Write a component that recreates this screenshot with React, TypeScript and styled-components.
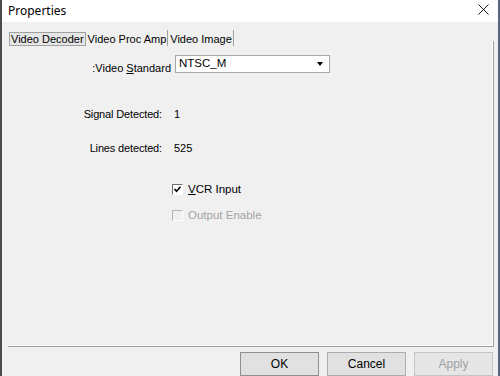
import React from "react";
import styled, { createGlobalStyle } from "styled-components";

const GlobalStyle = createGlobalStyle`
  html, body {
    margin: 0;
    padding: 0;
    width: 500px;
    height: 376px;
    overflow: hidden;
    background: #f0f0f0;
  }
`;

export default function App() {
  return (
    <>
      <GlobalStyle />
      <Window>
        <TitleBar>
          <Title>Properties</Title>
          <CloseButton>
            <svg width="11" height="11" viewBox="0 0 11 11">
              <path d="M0.5 0.5 L10.5 10.5 M10.5 0.5 L0.5 10.5" stroke="#1a1a1a" strokeWidth="1" />
            </svg>
          </CloseButton>
        </TitleBar>
        <Body>
          <TabStrip>
            <Tab $active>Video Decoder</Tab>
            <Tab>Video Proc Amp</Tab>
            <Tab>Video Image</Tab>
          </TabStrip>
          <Panel>
            <StandardRow>
              <StandardLabel>
                :Video <u>S</u>tandard
              </StandardLabel>
              <Select>
                <SelectText>NTSC_M</SelectText>
                <Arrow />
              </Select>
            </StandardRow>
            <InfoGrid>
              <InfoLabel>Signal Detected:</InfoLabel>
              <InfoValue>1</InfoValue>
              <InfoLabel>Lines detected:</InfoLabel>
              <InfoValue>525</InfoValue>
            </InfoGrid>
            <Checks>
              <CheckRow>
                <CheckBox>
                  <svg width="9" height="9" viewBox="0 0 9 9">
                    <path d="M1.5 4 L3.5 6.2 L7.5 1.8" stroke="#000" strokeWidth="1.6" fill="none" />
                  </svg>
                </CheckBox>
                <CheckText>
                  <u>V</u>CR Input
                </CheckText>
              </CheckRow>
              <CheckRow $disabled>
                <CheckBox $disabled />
                <CheckText $disabled>Output Enable</CheckText>
              </CheckRow>
            </Checks>
          </Panel>
          <ButtonRow>
            <Button $default>OK</Button>
            <Button>Cancel</Button>
            <Button disabled>Apply</Button>
          </ButtonRow>
        </Body>
      </Window>
    </>
  );
}

const Window = styled.div`
  width: 500px;
  height: 376px;
  box-sizing: border-box;
  border-left: 2px solid #4b4b4b;
  border-right: 2px solid #56647e;
  display: flex;
  flex-direction: column;
  background: #f0f0f0;
  overflow: hidden;
  font-family: "Liberation Sans", Arial, sans-serif;
  color: #000;
`;

const TitleBar = styled.div`
  height: 22px;
  flex: none;
  background: #ffffff;
  display: flex;
  align-items: center;
  justify-content: space-between;
  padding: 0 9px 0 6px;
`;

const Title = styled.span`
  font-family: "Noto Sans", "Open Sans", sans-serif;
  font-size: 12px;
  color: #000;
  margin-top: -1px;
`;

const CloseButton = styled.span`
  display: flex;
  margin-top: -3px;
`;

const Body = styled.div`
  flex: 1;
  display: flex;
  flex-direction: column;
  padding: 8px 4px 0 6px;
  min-height: 0;
`;

const TabStrip = styled.div`
  display: flex;
  height: 16px;
  flex: none;
  align-items: stretch;
`;

const Tab = styled.div<{ $active?: boolean }>`
  font-size: 11px;
  line-height: 12px;
  padding: 3px 1px 0 2px;
  border-right: 1px solid #a0a0a0;
  white-space: nowrap;
  ${({ $active }) =>
    $active &&
    `
    border: 1px solid #a0a0a0;
    background: #e6e6e6;
    height: 12px;
    margin: 2px 0 0 1px;
    padding: 0 1px 0 1px;
  `}
`;

const Panel = styled.div`
  flex: 1;
  min-height: 0;
  margin-top: -5px;
  padding-top: 5px;
  border-right: 1px solid #a0a0a0;
  border-bottom: 1px solid #a0a0a0;
  box-shadow: inset -1px -1px 0 #ffffff;
  display: flex;
  flex-direction: column;
  font-size: 11px;
`;

const StandardRow = styled.div`
  display: flex;
  align-items: flex-end;
  margin-top: 9px;
`;

const StandardLabel = styled.span`
  width: 163px;
  text-align: right;
  line-height: 14px;
  margin-bottom: -2px;
`;

const Select = styled.div`
  margin-left: 4px;
  width: 155px;
  height: 18px;
  box-sizing: border-box;
  border: 1px solid #a7a7a7;
  background: #ffffff;
  display: flex;
  justify-content: space-between;
  align-items: flex-start;
`;

const SelectText = styled.span`
  padding: 1px 0 0 3px;
  line-height: 12px;
  font-size: 11.5px;
`;

const Arrow = styled.span`
  width: 0;
  height: 0;
  border-left: 3.5px solid transparent;
  border-right: 3.5px solid transparent;
  border-top: 4px solid #000;
  margin: 6px 6px 0 0;
`;

const InfoGrid = styled.div`
  display: grid;
  grid-template-columns: 154px auto;
  column-gap: 12px;
  row-gap: 20px;
  margin-top: 34px;
  line-height: 14px;
`;

const InfoLabel = styled.span`
  text-align: right;
  letter-spacing: -0.15px;
`;

const InfoValue = styled.span``;

const Checks = styled.div`
  display: flex;
  flex-direction: column;
  gap: 12px;
  margin: 27px 0 0 164px;
`;

const CheckRow = styled.div<{ $disabled?: boolean }>`
  display: flex;
  align-items: center;
  gap: 5px;
  height: 14px;
`;

const CheckBox = styled.span<{ $disabled?: boolean }>`
  width: 11px;
  height: 11px;
  box-sizing: border-box;
  border-top: 1px solid ${({ $disabled }) => ($disabled ? "#b4b4b4" : "#6e6e6e")};
  border-left: 1px solid ${({ $disabled }) => ($disabled ? "#b4b4b4" : "#6e6e6e")};
  border-right: 1px solid #ffffff;
  border-bottom: 1px solid #ffffff;
  background: ${({ $disabled }) => ($disabled ? "#f0f0f0" : "#ffffff")};
  display: flex;
  align-items: center;
  justify-content: center;
`;

const CheckText = styled.span<{ $disabled?: boolean }>`
  font-size: 11.5px;
  color: ${({ $disabled }) => ($disabled ? "#a3a3a3" : "#000")};
`;

const ButtonRow = styled.div`
  display: flex;
  justify-content: flex-end;
  gap: 8px;
  padding: 5px 1px 0 0;
  height: 24px;
  flex: none;
`;

const Button = styled.button<{ $default?: boolean }>`
  width: 79px;
  height: 24px;
  box-sizing: border-box;
  background: #e1e1e1;
  border: 1px solid ${({ $default }) => ($default ? "#8f8f8f" : "#adadad")};
  font-family: "Liberation Sans", Arial, sans-serif;
  font-size: 12px;
  color: #000;
  padding: 0;

  &:disabled {
    background: #e6e6e6;
    border-color: #c4c4c4;
    color: #a0a0a0;
  }
`;
